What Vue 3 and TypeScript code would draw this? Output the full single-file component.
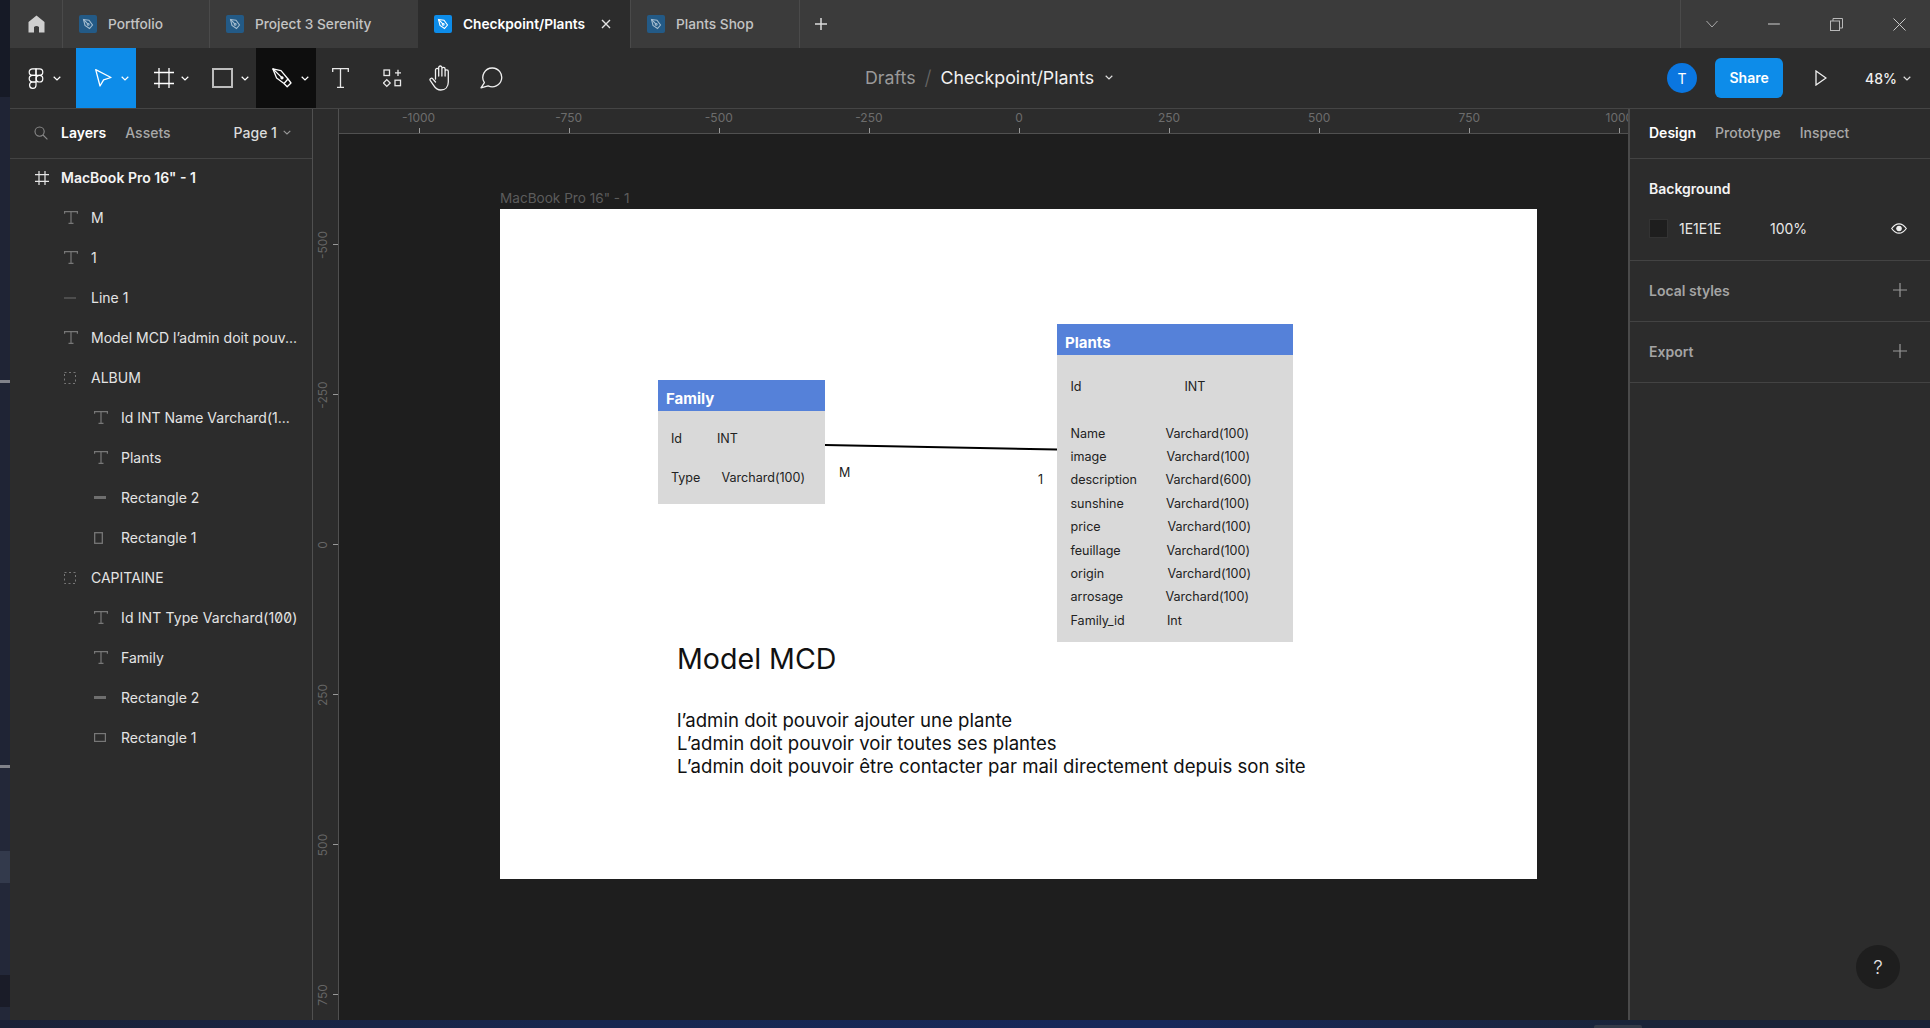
<script setup lang="ts">
type LayerKind = 'frame' | 'text' | 'line' | 'group' | 'bar' | 'tall' | 'wide'

const tabs = [
  { name: 'Portfolio', width: 147, active: false },
  { name: 'Project 3 Serenity', width: 209, active: false },
  { name: 'Checkpoint/Plants', width: 212, active: true },
  { name: 'Plants Shop', width: 169, active: false },
]

const layers: { name: string; kind: LayerKind; depth: number; zero?: boolean }[] = [
  { name: 'MacBook Pro 16" - 1', kind: 'frame', depth: 0 },
  { name: 'M', kind: 'text', depth: 1 },
  { name: '1', kind: 'text', depth: 1 },
  { name: 'Line 1', kind: 'line', depth: 1 },
  { name: 'Model MCD l’admin doit pouv...', kind: 'text', depth: 1 },
  { name: 'ALBUM', kind: 'group', depth: 1 },
  { name: 'Id INT Name Varchard(1...', kind: 'text', depth: 2 },
  { name: 'Plants', kind: 'text', depth: 2 },
  { name: 'Rectangle 2', kind: 'bar', depth: 2 },
  { name: 'Rectangle 1', kind: 'tall', depth: 2 },
  { name: 'CAPITAINE', kind: 'group', depth: 1 },
  { name: 'Id INT Type Varchard(100)', kind: 'text', depth: 2, zero: true },
  { name: 'Family', kind: 'text', depth: 2 },
  { name: 'Rectangle 2', kind: 'bar', depth: 2 },
  { name: 'Rectangle 1', kind: 'wide', depth: 2 },
]

// ruler marks, x/y relative to their own ruler strip
const topMarks = [-1000, -750, -500, -250, 0, 250, 500, 750, 1000].map((v) => ({
  label: String(v),
  x: 1018 - 338 + (v / 250) * 150.1,
}))
const sideMarks = [-500, -250, 0, 250, 500, 750].map((v) => ({
  label: String(v),
  y: 545 - 134 + (v / 250) * 150,
}))

const plantRows = [
  { name: 'Name', type: 'Varchard(100)', dx: 0 },
  { name: 'image', type: 'Varchard(100)', dx: 1 },
  { name: 'description', type: 'Varchard(600)', dx: 0 },
  { name: 'sunshine', type: 'Varchard(100)', dx: 0.5 },
  { name: 'price', type: 'Varchard(100)', dx: 2 },
  { name: 'feuillage', type: 'Varchard(100)', dx: 1 },
  { name: 'origin', type: 'Varchard(100)', dx: 2 },
  { name: 'arrosage', type: 'Varchard(100)', dx: 0 },
  { name: 'Family_id', type: 'Int', dx: 1.5 },
]
</script>

<template>
  <div class="screen">
    <div class="top">
      <div class="strip">
        <div class="seg s1"></div>
        <div class="seg s2"></div>
        <div class="seg mark"></div>
        <div class="seg s3"></div>
        <div class="seg mark"></div>
        <div class="seg s4"></div>
        <div class="seg s5"></div>
        <div class="seg s6"></div>
        <div class="seg s7"></div>
        <div class="seg s8"></div>
      </div>

      <div class="window">
        <!-- tab bar -->
        <div class="tabbar">
          <div class="home">
            <svg width="17" height="18" viewBox="0 0 17 18"><path d="M8.5 0.5 L16.5 7 V17.5 H11 V12 Q8.5 10 6 12 V17.5 H0.5 V7 Z" fill="#cfcfcf" /></svg>
          </div>
          <div v-for="t in tabs" :key="t.name" class="tab" :class="{ active: t.active }" :style="{ width: t.width + 'px' }">
            <span class="file-icon">
              <svg width="12" height="12" viewBox="0 0 12 12" fill="none" stroke="currentColor" stroke-width="1.1"><path d="M1.5 1.5 L7 2.2 L10.5 7 L7.5 10.5 L3 7.5 Z" /><path d="M1.5 1.5 L6 6.2" /><circle cx="6.2" cy="6.4" r="0.9" /></svg>
            </span>
            <span class="tab-name">{{ t.name }}</span>
            <svg v-if="t.active" class="tab-close" width="10" height="10" viewBox="0 0 10 10"><path d="M1 1 L9 9 M9 1 L1 9" stroke="#e4e4e4" stroke-width="1.4" /></svg>
          </div>
          <div class="tab-plus">
            <svg width="12" height="12" viewBox="0 0 12 12"><path d="M6 0 V12 M0 6 H12" stroke="#dcdcdc" stroke-width="1.5" /></svg>
          </div>
          <div class="win-controls">
            <svg class="wc" width="12" height="8" viewBox="0 0 12 8"><path d="M0.5 1 L6 7 L11.5 1" fill="none" stroke="#a8a8a8" /></svg>
            <svg class="wc" width="12" height="2" viewBox="0 0 12 2"><path d="M0 1 H12" stroke="#b8b8b8" stroke-width="1.2" /></svg>
            <svg class="wc" width="13" height="13" viewBox="0 0 13 13" fill="none" stroke="#b8b8b8"><rect x="0.5" y="3" width="9" height="9.5" /><path d="M3 3 V0.5 H12.5 V10 H9.5" /></svg>
            <svg class="wc" width="13" height="13" viewBox="0 0 13 13"><path d="M0.5 0.5 L12.5 12.5 M12.5 0.5 L0.5 12.5" stroke="#c8c8c8" /></svg>
          </div>
        </div>

        <!-- toolbar -->
        <div class="toolbar">
          <div class="tools">
            <div class="tool t-figma">
              <svg width="16" height="21" viewBox="0 0 16 21" fill="none" stroke="#fff" stroke-width="1.2">
                <path d="M8 .8 H4.5 a3.3 3.3 0 0 0 0 6.6 H8 Z" />
                <path d="M8 .8 H11.5 a3.3 3.3 0 0 1 0 6.6 H8 Z" />
                <path d="M8 7.4 H4.5 a3.3 3.3 0 0 0 0 6.6 H8 Z" />
                <circle cx="11.5" cy="10.7" r="3.3" />
                <path d="M8 14 H4.5 a3.2 3.2 0 1 0 3.5 3.2 Z" />
              </svg>
              <svg class="chev" width="8" height="5" viewBox="0 0 8 5"><path d="M.7 .8 L4 4 L7.3 .8" fill="none" stroke="#fff" stroke-width="1.2" /></svg>
            </div>
            <div class="tool t-move">
              <svg width="17" height="18" viewBox="0 0 17 18"><path d="M.7 .7 L16 8.5 L8.6 10.8 L5 17 Z" fill="none" stroke="#fff" stroke-width="1.3" stroke-linejoin="round" /></svg>
              <svg class="chev" width="8" height="5" viewBox="0 0 8 5"><path d="M.7 .8 L4 4 L7.3 .8" fill="none" stroke="#fff" stroke-width="1.2" /></svg>
            </div>
            <div class="tool t-frame">
              <svg width="20" height="20" viewBox="0 0 20 20"><path d="M5 0 V20 M15 0 V20 M0 4.5 H20 M0 15.5 H20" stroke="#fff" stroke-width="1.3" /></svg>
              <svg class="chev" width="8" height="5" viewBox="0 0 8 5"><path d="M.7 .8 L4 4 L7.3 .8" fill="none" stroke="#fff" stroke-width="1.2" /></svg>
            </div>
            <div class="tool t-rect">
              <svg width="21" height="20" viewBox="0 0 21 20"><rect x="1" y="1" width="19" height="18" fill="none" stroke="#bdbdbd" stroke-width="2" /></svg>
              <svg class="chev" width="8" height="5" viewBox="0 0 8 5"><path d="M.7 .8 L4 4 L7.3 .8" fill="none" stroke="#fff" stroke-width="1.2" /></svg>
            </div>
            <div class="tool t-pen">
              <svg width="20" height="20" viewBox="0 0 20 20" fill="none" stroke="#fff" stroke-width="1.3" stroke-linejoin="round"><path d="M.8 .8 L9 2.6 L16 11 L12 15.5 L4.6 10 Z" /><path d="M.8 .8 L9.6 9.4" /><circle cx="10" cy="9.8" r="1" fill="#fff" /><path d="M12 15.5 L15.2 18.8 L19 15 L16 11" /></svg>
              <svg class="chev" width="8" height="5" viewBox="0 0 8 5"><path d="M.7 .8 L4 4 L7.3 .8" fill="none" stroke="#fff" stroke-width="1.2" /></svg>
            </div>
            <div class="tool t-text">
              <svg width="17" height="20" viewBox="0 0 17 20" fill="none" stroke="#e8e8e8" stroke-width="1.3"><path d="M.7 4 V.7 H16.3 V4 M8.5 .7 V19.3 M5 19.3 H12" /></svg>
            </div>
            <div class="tool t-comp">
              <svg width="19" height="19" viewBox="0 0 19 19" fill="none" stroke="#e8e8e8" stroke-width="1.3"><rect x="1" y="1" width="5.5" height="5.5" /><path d="M15 .8 V7 M12 3.8 H18" /><path d="M3.8 10.6 L7.2 14 L3.8 17.4 L.4 14 Z" /><rect x="12" y="11.2" width="5.5" height="5.5" /></svg>
            </div>
            <div class="tool t-hand">
              <svg width="23" height="26" viewBox="0 0 23 26" fill="none" stroke="#f0f0f0" stroke-width="1.3" stroke-linecap="round" stroke-linejoin="round"><path d="M6.5 14 V5 a1.6 1.6 0 0 1 3.2 0 V11 M9.7 11 V2.6 a1.6 1.6 0 0 1 3.2 0 V11 M12.9 11 V4 a1.6 1.6 0 0 1 3.2 0 V11 M16.1 11 V6.4 a1.6 1.6 0 0 1 3.2 0 V17 c0 4.8 -3 8 -7.5 8 c-3.6 0 -5.2 -1.4 -7 -4.4 L1.2 15.4 c-.9 -1.6 1.4 -3 2.6 -1.6 L6.5 17" /></svg>
            </div>
            <div class="tool t-comment">
              <svg width="23" height="22" viewBox="0 0 23 22" fill="none" stroke="#f0f0f0" stroke-width="1.3"><path d="M12.5 1 a9.4 9.4 0 1 1 -4.4 17.8 L1 20.8 L4.4 15.6 A9.4 9.4 0 0 1 12.5 1 Z" stroke-linejoin="round" /></svg>
            </div>
          </div>
          <div class="crumbs">
            <span class="drafts">Drafts</span>
            <span class="slash">/</span>
            <span class="file">Checkpoint/Plants</span>
            <svg width="8" height="5" viewBox="0 0 8 5"><path d="M.7 .8 L4 4 L7.3 .8" fill="none" stroke="#ddd" stroke-width="1.2" /></svg>
          </div>
          <div class="actions">
            <div class="avatar">T</div>
            <div class="share">Share</div>
            <svg class="play" width="12" height="16" viewBox="0 0 12 16"><path d="M1 1 L11 8 L1 15 Z" fill="none" stroke="#f0f0f0" stroke-width="1.3" /></svg>
            <div class="zoom">48%</div>
            <svg width="8" height="5" viewBox="0 0 8 5"><path d="M.7 .8 L4 4 L7.3 .8" fill="none" stroke="#ddd" stroke-width="1.2" /></svg>
          </div>
        </div>

        <div class="workspace">
          <!-- layers panel -->
          <aside class="left">
            <div class="panel-tabs">
              <svg class="search" width="14" height="14" viewBox="0 0 14 14" fill="none" stroke="#8a8a8a" stroke-width="1.1"><circle cx="5.6" cy="5.6" r="4.6" /><path d="M9 9 L13.4 13.4" /></svg>
              <span class="tab-on">Layers</span>
              <span class="tab-off">Assets</span>
              <span class="page">Page 1</span>
              <svg width="8" height="5" viewBox="0 0 8 5"><path d="M.7 .8 L4 4 L7.3 .8" fill="none" stroke="#999" stroke-width="1.1" /></svg>
            </div>
            <div class="layer-list">
              <div v-for="(l, i) in layers" :key="i" class="layer" :class="'d' + l.depth">
                <span class="layer-icon">
                  <svg v-if="l.kind === 'frame'" width="14" height="14" viewBox="0 0 14 14"><path d="M4 0 V14 M10 0 V14 M0 3.6 H14 M0 10.4 H14" stroke="#e6e6e6" stroke-width="1.2" /></svg>
                  <svg v-else-if="l.kind === 'text'" width="14" height="13" viewBox="0 0 14 13" fill="none" stroke="#777" stroke-width="1.2"><path d="M.6 2.8 V.6 H13.4 V2.8 M7 .6 V12.4 M4.5 12.4 H9.5" /></svg>
                  <svg v-else-if="l.kind === 'line'" width="12" height="2" viewBox="0 0 12 2"><path d="M0 1 H12" stroke="#666" stroke-width="1.2" /></svg>
                  <svg v-else-if="l.kind === 'group'" width="12" height="12" viewBox="0 0 12 12"><rect x=".5" y=".5" width="11" height="11" fill="none" stroke="#777" stroke-dasharray="2 2.5" /></svg>
                  <svg v-else-if="l.kind === 'bar'" width="12" height="3" viewBox="0 0 12 3"><rect width="12" height="3" fill="#6e6e6e" /></svg>
                  <svg v-else-if="l.kind === 'tall'" width="9" height="12" viewBox="0 0 9 12"><rect x=".7" y=".7" width="7.6" height="10.6" fill="none" stroke="#777" stroke-width="1.3" /></svg>
                  <svg v-else width="12" height="9" viewBox="0 0 12 9"><rect x=".6" y=".6" width="10.8" height="7.8" fill="none" stroke="#777" stroke-width="1.2" /></svg>
                </span>
                <span class="layer-name" :class="{ zero: l.zero }">{{ l.name }}</span>
              </div>
            </div>
          </aside>

          <!-- vertical ruler -->
          <div class="side-ruler">
            <div v-for="m in sideMarks" :key="m.label" class="side-mark" :style="{ top: m.y + 25 + 'px' }">
              <span class="side-label">{{ m.label }}</span>
              <span class="side-tick"></span>
            </div>
          </div>

          <div class="center">
            <div class="top-ruler">
              <div v-for="m in topMarks" :key="m.label" class="top-mark" :style="{ left: m.x + 'px' }">
                <span class="top-label">{{ m.label }}</span>
                <span class="top-tick"></span>
              </div>
            </div>
            <div class="canvas">
              <div class="frame-name">MacBook Pro 16" - 1</div>
              <div class="frame">
                <svg class="link" width="240" height="10" viewBox="0 0 240 10"><path d="M0 2 L232 6.5" stroke="#000" stroke-width="2" /></svg>

                <div class="entity family">
                  <div class="entity-head">Family</div>
                  <div class="family-body">
                    <div class="f-row"><span class="f-a">Id</span><span>INT</span></div>
                    <div class="f-row"><span class="f-b">Type</span><span>Varchard(100)</span></div>
                  </div>
                </div>
                <span class="card m">M</span>
                <span class="card one">1</span>

                <div class="entity plants">
                  <div class="entity-head">Plants</div>
                  <div class="plants-body">
                    <div class="p-row p-id"><span class="p-id-name">Id</span><span>INT</span></div>
                    <div v-for="r in plantRows" :key="r.name" class="p-row">
                      <span class="p-name">{{ r.name }}</span>
                      <span :style="{ marginLeft: r.dx + 'px' }">{{ r.type }}</span>
                    </div>
                  </div>
                </div>

                <div class="notes">
                  <h1>Model MCD</h1>
                  <p>l’admin doit pouvoir ajouter une plante</p>
                  <p>L’admin doit pouvoir voir toutes ses plantes</p>
                  <p>L’admin doit pouvoir être contacter par mail directement depuis son site</p>
                </div>
              </div>
            </div>
          </div>

          <!-- design panel -->
          <aside class="right">
            <div class="panel-tabs r-tabs">
              <span class="tab-on">Design</span>
              <span class="tab-off">Prototype</span>
              <span class="tab-off">Inspect</span>
            </div>
            <section class="bg-section">
              <div class="sec-title">Background</div>
              <div class="fill-row">
                <span class="swatch"></span>
                <span class="hex">1E1E1E</span>
                <span class="pct">100%</span>
                <svg class="eye" width="16" height="11" viewBox="0 0 16 11" fill="none" stroke="#f0f0f0" stroke-width="1.2"><path d="M.7 5.5 C3.5 1.6 5.7 .8 8 .8 C10.3 .8 12.5 1.6 15.3 5.5 C12.5 9.4 10.3 10.2 8 10.2 C5.7 10.2 3.5 9.4 .7 5.5 Z" /><circle cx="8" cy="5.5" r="2.2" fill="#f0f0f0" /></svg>
              </div>
            </section>
            <section class="plain-section">
              <span>Local styles</span>
              <svg width="14" height="14" viewBox="0 0 14 14"><path d="M7 0 V14 M0 7 H14" stroke="#999" stroke-width="1.2" /></svg>
            </section>
            <section class="plain-section">
              <span>Export</span>
              <svg width="14" height="14" viewBox="0 0 14 14"><path d="M7 0 V14 M0 7 H14" stroke="#999" stroke-width="1.2" /></svg>
            </section>
            <div class="help">?</div>
          </aside>
        </div>
      </div>
    </div>
    <div class="taskbar"><span class="task-chip"></span></div>
  </div>
</template>

<style>
html,
body {
  margin: 0;
  background: #1a2236;
}
</style>

<style scoped>
* {
  box-sizing: border-box;
}
.screen {
  width: 1930px;
  height: 1028px;
  display: flex;
  flex-direction: column;
  overflow: hidden;
  font-family: Inter, "Noto Sans", sans-serif;
  color: #e8e8e8;
}
.top {
  display: flex;
  height: 1020px;
}
.strip {
  width: 10px;
  display: flex;
  flex-direction: column;
}
.seg.s1 { height: 97px; background: #161a26; }
.seg.s2 { height: 283px; background: #1f2435; }
.seg.mark { height: 3px; background: #80828a; }
.seg.s3 { height: 382px; background: #1f2435; }
.seg.s4 { height: 83px; background: #232839; }
.seg.s5 { height: 32px; background: #333a4c; }
.seg.s6 { height: 92px; background: #232839; }
.seg.s7 { height: 32px; background: #1a1c28; }
.seg.s8 { flex: 1; background: #232839; }
.window {
  width: 1920px;
  display: flex;
  flex-direction: column;
}

/* tabs */
.tabbar {
  height: 48px;
  background: #3b3b3b;
  display: flex;
  align-items: center;
  flex-shrink: 0;
}
.home {
  width: 52px;
  height: 48px;
  display: flex;
  align-items: center;
  padding-left: 18px;
}
.tab {
  height: 48px;
  display: flex;
  align-items: center;
  padding-left: 16px;
  padding-bottom: 1px;
  border-left: 1px solid #4a4a4a;
  font-size: 13.7px;
  font-weight: 500;
  color: #c4c4c4;
}
.tab.active {
  background: #2c2c2c;
  color: #fff;
  font-weight: 600;
  border-left: none;
}
.file-icon {
  width: 18px;
  height: 18px;
  border-radius: 2px;
  background: #235a86;
  color: #a3bccf;
  display: flex;
  align-items: center;
  justify-content: center;
  margin-right: 11px;
}
.tab.active .file-icon {
  background: #0d8ce9;
  color: #fff;
}
.tab-close {
  margin-left: 16px;
}
.tab-plus {
  width: 45px;
  height: 48px;
  border-left: 1px solid #4a4a4a;
  display: flex;
  align-items: center;
  padding-left: 15px;
}
.win-controls {
  margin-left: auto;
  width: 250px;
  height: 48px;
  border-left: 1px solid #4a4a4a;
  display: flex;
  align-items: center;
  gap: 50px;
  padding-left: 25px;
}

/* toolbar */
.toolbar {
  height: 61px;
  background: #2c2c2c;
  border-bottom: 1px solid #454545;
  display: flex;
  align-items: stretch;
  flex-shrink: 0;
  position: relative;
}
.tools {
  display: flex;
}
.tool {
  height: 60px;
  display: flex;
  align-items: center;
}
.chev {
  margin-left: 9px;
}
.t-figma { width: 66px; padding-left: 18px; }
.t-figma .chev { margin-left: 9px; }
.t-move { width: 60px; background: #0d8ce9; padding-left: 19px; }
.t-frame { width: 60px; padding-left: 18px; }
.t-frame .chev { margin-left: 7px; }
.t-rect { width: 60px; padding-left: 16px; }
.t-rect .chev { margin-left: 8px; }
.t-pen { width: 60px; background: #0e0e0e; padding-left: 16px; }
.t-pen .chev { margin-left: 9px; }
.t-text { width: 52px; padding-left: 16px; }
.t-comp { width: 52px; padding-left: 15px; }
.t-hand { width: 48px; padding-left: 9px; }
.t-comment { width: 48px; padding-left: 12px; }
.crumbs {
  position: absolute;
  left: 855px;
  top: 0;
  height: 60px;
  padding-bottom: 1px;
  display: flex;
  align-items: center;
  font-size: 17.8px;
}
.drafts { color: #9a9a9a; }
.slash { color: #666; margin: 0 9px 0 9px; font-weight: 300; font-size: 20px; }
.file { color: #f2f2f2; margin-right: 11px; }
.actions {
  margin-left: auto;
  height: 60px;
  display: flex;
  align-items: center;
  padding-right: 19px;
}
.avatar {
  width: 30px;
  height: 30px;
  border-radius: 50%;
  background: #0a76e0;
  color: #fff;
  font-size: 14px;
  display: flex;
  align-items: center;
  justify-content: center;
  margin-right: 18px;
}
.share {
  width: 68px;
  height: 40px;
  padding-bottom: 2px;
  background: #0d8ce9;
  border-radius: 6px;
  color: #fff;
  font-size: 14px;
  font-weight: 600;
  display: flex;
  align-items: center;
  justify-content: center;
  margin-right: 32px;
}
.play { margin-right: 38px; }
.zoom { font-size: 14px; font-weight: 500; color: #f0f0f0; margin-right: 6px; }

/* workspace */
.workspace {
  flex: 1;
  display: flex;
  min-height: 0;
}
.left {
  width: 303px;
  background: #2c2c2c;
  border-right: 1px solid #505050;
  flex-shrink: 0;
}
.panel-tabs {
  height: 50px;
  border-bottom: 1px solid #434343;
  display: flex;
  align-items: center;
  font-size: 14px;
  font-weight: 500;
  padding-left: 24px;
  padding-bottom: 2px;
}
.search { margin-right: 13px; }
.tab-on { color: #fff; font-weight: 600; }
.tab-off { color: #a8a8a8; margin-left: 19px; }
.page { margin-left: 63px; margin-right: 6px; color: #dcdcdc; }
.layer-list {
  margin-top: -1.5px;
}
.layer {
  height: 40px;
  display: flex;
  align-items: center;
  font-size: 14px;
  white-space: nowrap;
}
.layer-icon {
  width: 30px;
  display: flex;
  justify-content: center;
}
.layer.d0 { padding-left: 24.5px; font-weight: 600; color: #f4f4f4; }
.layer.d0 .layer-icon { width: 26.5px; justify-content: flex-start; }
.layer.d1 { padding-left: 46px; color: #e4e4e4; }
.layer.d1 .layer-icon { width: 35px; justify-content: flex-start; padding-left: 8px; }
.layer.d2 { padding-left: 76px; color: #e4e4e4; }
.layer.d2 .layer-icon { width: 35px; justify-content: flex-start; padding-left: 8px; }
.zero { font-feature-settings: "zero"; letter-spacing: 0.12px; }

.side-ruler {
  width: 26px;
  background: #2c2c2c;
  border-right: 1px solid #505050;
  position: relative;
  flex-shrink: 0;
}
.side-mark {
  position: absolute;
  left: 0;
  width: 25px;
  height: 0;
}
.side-label {
  position: absolute;
  left: 9px;
  top: 0;
  transform: translate(-50%, -50%) rotate(-90deg);
  font-size: 12px;
  color: #666;
  white-space: nowrap;
}
.side-tick {
  position: absolute;
  left: 20px;
  top: -1px;
  width: 5px;
  height: 1px;
  background: #999;
}

.center {
  width: 1289px;
  display: flex;
  flex-direction: column;
  flex-shrink: 0;
}
.top-ruler {
  height: 25px;
  background: #2c2c2c;
  border-bottom: 1px solid #505050;
  position: relative;
  overflow: hidden;
  flex-shrink: 0;
}
.top-mark {
  position: absolute;
  top: 0;
  width: 0;
}
.top-label {
  position: absolute;
  left: 0;
  top: 1px;
  transform: translateX(-50%);
  font-size: 12px;
  line-height: 15px;
  color: #6c6c6c;
  white-space: nowrap;
}
.top-tick {
  position: absolute;
  left: 0;
  top: 19px;
  width: 1px;
  height: 5px;
  background: #999;
}
.canvas {
  flex: 1;
  background: #1e1e1e;
  position: relative;
  overflow: hidden;
}
.frame-name {
  position: absolute;
  left: 161px;
  top: 56px;
  font-size: 13.6px;
  line-height: 16px;
  color: #5c5c5c;
}
.frame {
  position: absolute;
  left: 161px;
  top: 75px;
  width: 1037px;
  height: 670px;
  background: #fff;
  color: #1c1c1c;
}
.link {
  position: absolute;
  left: 325px;
  top: 234px;
}
.entity {
  position: absolute;
  background: #d9d9d9;
  font-size: 12.55px;
  color: #222;
}
.entity-head {
  height: 31px;
  background: #5581d9;
  color: #fff;
  font-size: 15px;
  font-weight: 700;
  line-height: 38px;
  padding-left: 8px;
  overflow: visible;
}
.family {
  left: 158px;
  top: 171px;
  width: 167px;
  height: 124px;
}
.family-body {
  padding: 8.5px 0 0 13px;
}
.f-row {
  height: 39px;
  display: flex;
  align-items: center;
  line-height: 20px;
}
.f-a { width: 46px; }
.f-b { width: 50.5px; }
.card {
  position: absolute;
  font-size: 12.55px;
  line-height: 16px;
}
.m { left: 339px; top: 256px; }
.one { left: 538px; top: 263px; }
.plants {
  left: 557px;
  top: 115px;
  width: 236px;
  height: 318px;
}
.plants-body {
  padding: 19.5px 0 0 13.5px;
}
.p-row {
  height: 23.4px;
  display: flex;
  align-items: center;
}
.p-id {
  margin-bottom: 23.6px;
}
.p-id-name { width: 114px; }
.p-name { width: 95px; }
.notes {
  position: absolute;
  left: 177px;
  top: 430px;
  white-space: nowrap;
  color: #111;
}
.notes h1 {
  margin: 0 0 30px;
  font-size: 28.6px;
  font-weight: 400;
  line-height: 40px;
}
.notes p {
  margin: 0;
  font-size: 18.6px;
  line-height: 22.8px;
}

.right {
  flex: 1;
  background: #2c2c2c;
  border-left: 2px solid #4a4a4a;
  position: relative;
}
.r-tabs {
  padding-left: 19px;
}
.r-tabs .tab-off { margin-left: 19px; }
.bg-section {
  height: 102px;
  border-bottom: 1px solid #434343;
  padding: 21px 0 0 19px;
}
.sec-title {
  font-size: 14px;
  font-weight: 600;
  line-height: 18px;
  color: #f4f4f4;
}
.fill-row {
  margin-top: 20.5px;
  display: flex;
  align-items: center;
  font-size: 14px;
  height: 20px;
}
.swatch {
  width: 19px;
  height: 19px;
  background: #1e1e1e;
  border: 1px solid #333;
  margin-right: 11px;
}
.hex { width: 91px; }
.pct { width: 90px; }
.eye { margin-left: 31px; }
.plain-section {
  height: 61px;
  border-bottom: 1px solid #434343;
  display: flex;
  align-items: center;
  justify-content: space-between;
  padding: 0 23px 2px 19px;
  font-size: 14px;
  font-weight: 600;
  color: #a4a4a4;
}
.help {
  position: absolute;
  left: 226px;
  bottom: 31px;
  width: 44px;
  height: 44px;
  border-radius: 50%;
  background: #1e1e1e;
  color: #e4e4e4;
  font-size: 19px;
  font-weight: 300;
  display: flex;
  align-items: center;
  justify-content: center;
}
.taskbar {
  height: 8px;
  background: linear-gradient(90deg, #1a2136 0%, #17274f 30%, #16285a 60%, #1a2439 85%, #1a2236 100%);
  position: relative;
}
.task-chip {
  position: absolute;
  left: 1594px;
  top: 5px;
  width: 48px;
  height: 3px;
  border-radius: 2px 2px 0 0;
  background: #333a48;
}
</style>
